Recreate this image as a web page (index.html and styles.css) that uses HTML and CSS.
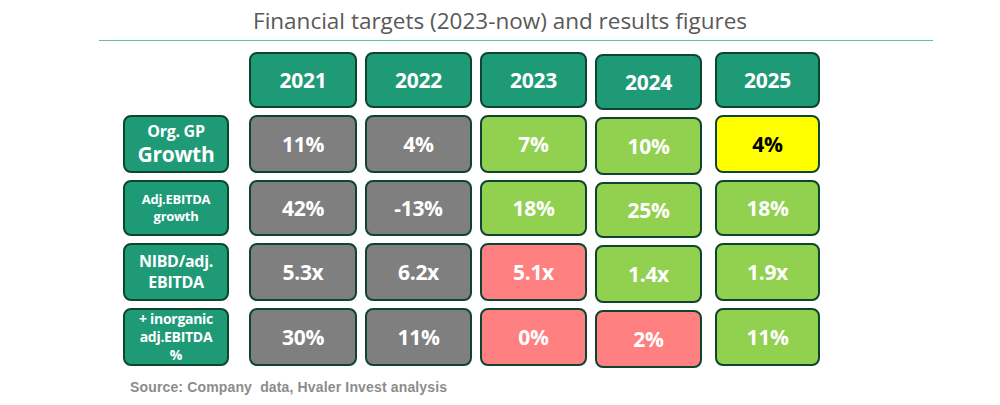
FILE: index.html
```html
<!DOCTYPE html>
<html>
<head>
<meta charset="utf-8">
<link rel="stylesheet" href="styles.css">
</head>
<body>
<div class="page">
  <h1 class="title">Financial targets (2023-now) and results figures</h1>
  <div class="rule"></div>
  <div class="grid">
    <div class="spacer"></div>
    <div class="cell head">2021</div>
    <div class="cell head">2022</div>
    <div class="cell head">2023</div>
    <div class="cell head c24">2024</div>
    <div class="cell head">2025</div>

    <div class="cell label"><span class="l1">Org. GP</span><span class="l2">Growth</span></div>
    <div class="cell gray">11%</div>
    <div class="cell gray">4%</div>
    <div class="cell green">7%</div>
    <div class="cell green c24">10%</div>
    <div class="cell yellow">4%</div>

    <div class="cell label small">Adj.EBITDA<br>growth</div>
    <div class="cell gray">42%</div>
    <div class="cell gray">-13%</div>
    <div class="cell green">18%</div>
    <div class="cell green c24">25%</div>
    <div class="cell green">18%</div>

    <div class="cell label mid">NIBD/adj.<br>EBITDA</div>
    <div class="cell gray">5.3x</div>
    <div class="cell gray">6.2x</div>
    <div class="cell red">5.1x</div>
    <div class="cell green c24">1.4x</div>
    <div class="cell green">1.9x</div>

    <div class="cell label mid2">+ inorganic<br>adj.EBITDA<br>%</div>
    <div class="cell gray">30%</div>
    <div class="cell gray">11%</div>
    <div class="cell red">0%</div>
    <div class="cell red c24">2%</div>
    <div class="cell green">11%</div>
  </div>
  <p class="source">Source: Company&nbsp; data, Hvaler Invest analysis</p>
</div>
</body>
</html>
```

FILE: styles.css
```css
html, body {
  margin: 0;
  padding: 0;
  background: #ffffff;
}

.page {
  width: 1000px;
  height: 405px;
  font-family: "Open Sans", "Noto Sans", sans-serif;
}

.title {
  margin: 0;
  padding-top: 6px;
  height: 34px;
  box-sizing: border-box;
  text-align: center;
  font-weight: 400;
  font-size: 22.5px;
  line-height: 30px;
  color: #595959;
}

.rule {
  margin-left: 99px;
  width: 834px;
  height: 0;
  margin-top: 6px;
  border-top: 1px solid #62bf9f;
}

.grid {
  margin-top: 11px;
  margin-left: 123px;
  display: grid;
  grid-template-columns: 118px 108px 107px 107px 112px 105px;
  grid-template-rows: 56px 58px 56px 58px 58px;
  column-gap: 8px;
  row-gap: 7px;
}

.cell {
  box-sizing: border-box;
  border: 2px solid #0e4530;
  border-radius: 8px;
  display: flex;
  flex-direction: column;
  align-items: center;
  justify-content: center;
  text-align: center;
  color: #ffffff;
  font-weight: 700;
  font-size: 21px;
  letter-spacing: -0.3px;
}

.c24 {
  width: 107px;
  margin-top: 2px;
  margin-bottom: -2px;
}

.head {
  background: #1f9a77;
  font-size: 21px;
}

.label {
  width: 106px;
  background: #1f9a77;
  font-size: 16px;
  line-height: 18px;
}

.label .l1 {
  display: block;
  font-size: 16px;
  line-height: 22px;
}

.label .l2 {
  display: block;
  font-size: 21px;
  line-height: 29px;
  margin-top: -2px;
}

.label.small {
  font-size: 13px;
  line-height: 17px;
}

.label.mid {
  font-size: 16px;
  line-height: 21px;
}

.label.mid2 {
  font-size: 14px;
  line-height: 18px;
}

.gray {
  background: #7f7f7f;
}

.green {
  background: #92d050;
}

.red {
  background: #ff8080;
}

.yellow {
  background: #ffff00;
  color: #000000;
}

.source {
  margin: 13px 0 0 130px;
  font-family: "Liberation Sans", Arial, sans-serif;
  font-weight: 700;
  font-size: 14px;
  color: #8c8c8c;
  letter-spacing: 0.15px;
}
```
